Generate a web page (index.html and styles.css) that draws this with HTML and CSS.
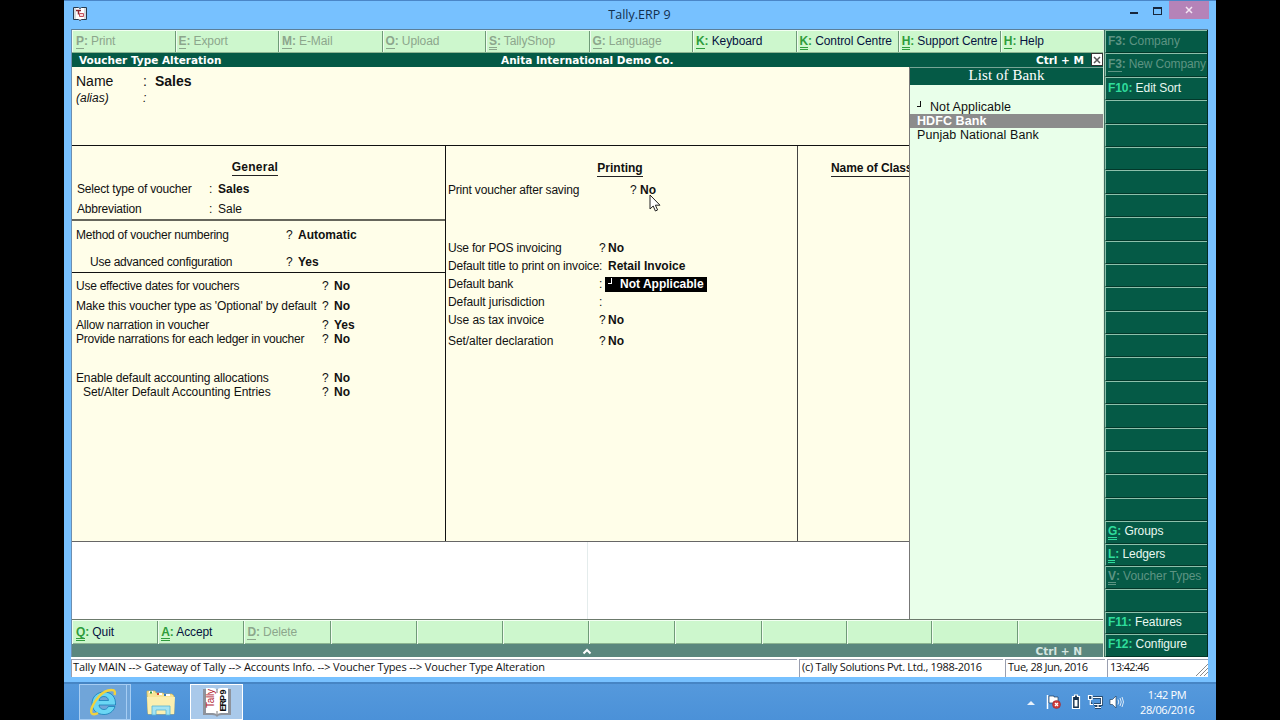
FILE: index.html
```html
<!DOCTYPE html>
<html>
	<head>
		<meta charset="utf-8">
		<title>Tally.ERP 9</title>
		<link rel="stylesheet" href="styles.css">
	</head>
	<body>
		<div class="desktop">
			<div class="titlebar">
				<svg class="appicon" width="16" height="16" viewBox="0 0 16 16">
					<path d="M1.500 1.500h5l1.500 1 1.500-1h5v12h-5l-1.500 1-1.500-1h-5z" fill="#fff" stroke="#26394e"/>
					<path d="M3 2v11M13 2v11" stroke="#aab4bd"/>
					<path d="M4 4.500h5M6.500 4.500v4" stroke="#8c2430" stroke-width="1.500"/>
					<path d="M7.500 7.500h4v3h-4z" fill="#f6dcdc" stroke="#c4505c"/>
				</svg>
				<span class="wintitle">Tally.ERP 9</span>
				<div class="winbtns">
					<span class="min"></span>
					<span class="max"></span>
					<span class="close"><svg width="8" height="8" viewBox="0 0 8 8"><path d="M1 1l6 6M7 1l-6 6" stroke="#f4e6f4" stroke-width="1.500"/></svg></span>
				</div>
			</div>

			<div class="client">
				<div class="main">
					<div class="toolbar">
						<div class="btn off"><b class="u1">P</b><b>:</b> Print</div>
						<div class="btn off"><b class="u1">E</b><b>:</b> Export</div>
						<div class="btn off"><b class="u1">M</b><b>:</b> E-Mail</div>
						<div class="btn off"><b class="u1">O</b><b>:</b> Upload</div>
						<div class="btn off"><b class="u2">S</b><b>:</b> TallyShop</div>
						<div class="btn off"><b class="u1">G</b><b>:</b> Language</div>
						<div class="btn"><b class="u1">K</b><b>:</b> Keyboard</div>
						<div class="btn"><b class="u2">K</b><b>:</b> Control Centre</div>
						<div class="btn"><b class="u2">H</b><b>:</b> Support Centre</div>
						<div class="btn"><b class="u1">H</b><b>:</b> Help</div>
					</div>
					<div class="strip">
						<span class="s-left">Voucher Type Alteration</span>
						<span class="s-mid">Anita International Demo Co.</span>
						<span class="s-right">Ctrl + M</span>
						<span class="s-close"><svg width="8" height="8" viewBox="0 0 8 8"><path d="M1 1l6 6M7 1l-6 6" stroke="#555" stroke-width="1.500"/></svg></span>
					</div>

					<div class="work">
						<div class="form">
							<div class="name">
								<div class="nrow"><span>Name</span><span>:</span><b>Sales</b></div>
								<div class="nrow alias"><i>(alias)</i><i>:</i></div>
							</div>
							<div class="cols">
								<div class="col general">
									<div class="sec sec1">
										<h2><span>General</span></h2>
										<div class="row"><span>Select type of voucher</span><span>:</span><b>Sales</b></div>
										<div class="row"><span>Abbreviation</span><span>:</span><span>Sale</span></div>
									</div>
									<div class="sec sec2">
										<div class="row"><span class="narrow">Method of voucher numbering</span><span>?</span><b>Automatic</b></div>
										<div class="row adv"><span class="narrow">Use advanced configuration</span><span>?</span><b>Yes</b></div>
									</div>
									<div class="sec sec3">
										<div class="row"><span class="narrow">Use effective dates for vouchers</span><span>?</span><b>No</b></div>
										<div class="row"><span class="opt">Make this voucher type as 'Optional' by default</span><span>?</span><b>No</b></div>
										<div class="row"><span>Allow narration in voucher</span><span>?</span><b>Yes</b></div>
										<div class="row tight"><span class="narrow">Provide narrations for each ledger in voucher</span><span>?</span><b>No</b></div>
										<div class="row alloc"><span class="opt">Enable default accounting allocations</span><span>?</span><b>No</b></div>
										<div class="row tight sub"><span class="loose">Set/Alter Default Accounting Entries</span><span>?</span><b>No</b></div>
									</div>
								</div>
								<div class="col printing">
									<h2><span>Printing</span></h2>
									<div class="row wide"><span>Print voucher after saving</span><span>?</span><b>No</b></div>
									<div class="row pos"><span>Use for POS invoicing</span><span>?</span><b>No</b></div>
									<div class="row"><span>Default title to print on invoice</span><span>:</span><b>Retail Invoice</b></div>
									<div class="row"><span>Default bank</span><span>:</span><b class="field"><i class="tick"></i>Not Applicable</b></div>
									<div class="row"><span class="loose">Default jurisdiction</span><span>:</span></div>
									<div class="row"><span class="loose">Use as tax invoice</span><span>?</span><b>No</b></div>
									<div class="row decl"><span class="loose">Set/alter declaration</span><span>?</span><b>No</b></div>
								</div>
								<div class="col classes">
									<h2><span>Name of Class</span></h2>
								</div>
							</div>
							<div class="blank"><div></div></div>
						</div>
						<div class="list">
							<div class="list-head">List of Bank</div>
							<div class="item first"><i class="tick"></i>Not Applicable</div>
							<div class="item sel">HDFC Bank</div>
							<div class="item">Punjab National Bank</div>
						</div>
					</div>

					<div class="toolbar bottom">
						<div class="btn"><b class="u2">Q</b><b>:</b> Quit</div>
						<div class="btn"><b class="u2">A</b><b>:</b> Accept</div>
						<div class="btn off"><b class="u1">D</b><b>:</b> Delete</div>
						<div class="btn"></div><div class="btn"></div><div class="btn"></div>
						<div class="btn"></div><div class="btn"></div><div class="btn"></div>
						<div class="btn"></div><div class="btn"></div><div class="btn"></div>
					</div>
					<div class="greybar">
						<svg width="10" height="7" viewBox="0 0 10 7"><path d="M1.500 5.500L5 2l3.500 3.500" fill="none" stroke="#fff" stroke-width="2"/></svg>
						<span>Ctrl + N</span>
					</div>
				</div>

				<div class="side">
					<div class="sb off"><b>F3:</b> Company</div>
					<div class="sb off"><b class="u1">F3</b><b>:</b> New Company</div>
					<div class="sb"><b>F10:</b> Edit Sort</div>
					<div class="sb"></div><div class="sb"></div><div class="sb"></div>
					<div class="sb"></div><div class="sb"></div><div class="sb"></div>
					<div class="sb"></div><div class="sb"></div><div class="sb"></div>
					<div class="sb"></div><div class="sb"></div><div class="sb"></div>
					<div class="sb"></div><div class="sb"></div><div class="sb"></div>
					<div class="sb"></div><div class="sb"></div><div class="sb"></div>
					<div class="sb low"><b class="u2">G</b><b>:</b> Groups</div>
					<div class="sb low"><b class="u2">L</b><b>:</b> Ledgers</div>
					<div class="sb low off"><b class="u2">V</b><b>:</b> Voucher Types</div>
					<div class="sb low"></div>
					<div class="sb low"><b>F11:</b> Features</div>
					<div class="sb low"><b>F12:</b> Configure</div>
				</div>
			</div>

			<div class="status">
				<div class="path">Tally MAIN --&gt; Gateway of Tally --&gt; Accounts Info. --&gt; Voucher Types --&gt; Voucher Type Alteration</div>
				<div class="copy">(c) Tally Solutions Pvt. Ltd., 1988-2016</div>
				<div class="date">Tue, 28 Jun, 2016</div>
				<div class="time">13:42:46
					<svg width="12" height="12" viewBox="0 0 12 12"><path d="M0 12L12 0M4 12l8-8M8 12l4-4" stroke="#8a8a8a"/></svg>
				</div>
			</div>

			<div class="taskbar">
				<div class="task ie">
					<svg width="30" height="30" viewBox="0 0 30 30">
						<path d="M27 19.500c-1.500 5-6 8-11 8C9 27.500 4 23 4 16.500S9 5 16 5c7.500 0 12 5 11.500 13H11c.3 2.800 2.200 4.500 5 4.500 2 0 3.500-1 4.300-3zM11 13.500h9.500c-.3-2.500-2-4-4.600-4-2.700 0-4.500 1.500-4.900 4z" fill="#6ad6f4" stroke="#177fb8" stroke-width=".8"/>
						<path d="M26.500 8c1-3 .3-5-2.500-5-3.500-.2-9 2-13 6.500-5 5.500-9 13-7.500 16.500 1 2 4 1.500 6.500 0" fill="none" stroke="#f2d23c" stroke-width="2.400"/>
					</svg>
				</div>
				<div class="ie-stack"></div>
				<div class="task folder">
					<svg width="32" height="30" viewBox="0 0 32 30">
						<path d="M2 6V4h8l1 2h7l1 1h8l2 2v18H3z" fill="#f7e596" stroke="#d3b552" stroke-width=".7"/>
						<path d="M4 5h4M12 7h5M20 8h5" stroke="#fff" stroke-width="2"/>
						<path d="M6 4.500v2" stroke="#2b9645" stroke-width="2"/>
						<path d="M13 6v2" stroke="#d34332" stroke-width="2"/>
						<path d="M20 7v2" stroke="#347bc0" stroke-width="2"/>
						<path d="M2 10h28l-1 17H3z" fill="#fbefb0"/>
						<path d="M7 28v-9h18v9h-4v-5H11v5z" fill="#a5e4f2" stroke="#55b4d4" stroke-width=".8"/>
					</svg>
				</div>
				<div class="task active">
					<svg width="30" height="30" viewBox="0 0 30 30">
						<path d="M1 2h9q4 0 5 2 1-2 5-2h9v26h-9q-4 0-5 2-1-2-5-2H1z" fill="#8e939c"/>
						<path d="M4 1h7q3 0 4 2 1-2 4-2h7v25h-7q-3 0-4 2-1-2-4-2H4z" fill="#fff"/>
						<path d="M15 2v4M15 24v4" stroke="#777"/>
						<text class="ico-red" transform="translate(12 21) rotate(-90)" textLength="19">Tally</text>
						<text class="ico-blk" transform="translate(24 24.500) rotate(-90)" textLength="22">ERP 9</text>
					</svg>
				</div>
				<div class="tray">
					<svg class="t-up" width="8" height="5" viewBox="0 0 8 5"><path d="M0 5l4-4 4 4z" fill="#e8f2fb"/></svg>
					<svg class="t-flag" width="16" height="16" viewBox="0 0 16 16">
						<path d="M1.500 1v14" stroke="#fff" stroke-width="1.500"/>
						<path d="M3 2h5v1h4v7H8V9H3z" fill="#fff" stroke="#1f3c5c" stroke-width=".7"/>
						<circle cx="10.500" cy="10.500" r="4" fill="#cf3a3a" stroke="#8e2530" stroke-width=".5"/>
						<path d="M9 9l3 3M12 9l-3 3" stroke="#fff" stroke-width="1.300"/>
					</svg>
					<svg class="t-bat" width="10" height="16" viewBox="0 0 10 16">
						<path d="M3.500 1h3v1.500h2v12h-7v-12h2z" fill="#17324f" stroke="#fff" stroke-width="1.200"/>
						<path d="M3.500 6h3v6.500h-3z" fill="#fff"/>
					</svg>
					<svg class="t-net" width="16" height="16" viewBox="0 0 16 16">
						<path d="M6 3.500h8.500v7H7M8 13.500h6M11 10.500v3" fill="none" stroke="#17324f" stroke-width="2.600"/>
						<path d="M6 3.500h8.500v7H7M8 13.500h6M11 10.500v3" fill="none" stroke="#fff" stroke-width="1.200"/>
						<path d="M1.500 1.500h3.500v4H1.500zM3.300 6v4.500H6" fill="#24496e" stroke="#fff" stroke-width="1.200"/>
					</svg>
					<svg class="t-vol" width="16" height="16" viewBox="0 0 16 16">
						<path d="M1 5.500h2.500L7 2v12l-3.500-3.500H1z" fill="#fff" stroke="#17324f" stroke-width=".6"/>
						<path d="M9 5.500q1.500 2.500 0 5M11 4q2.500 4 0 8M13 3q3 5 0 10" fill="none" stroke="#dceaf8" stroke-width="1"/>
					</svg>
					<div class="clock"><div>1:42 PM</div><div>28/06/2016</div></div>
				</div>
			</div>

			<svg class="cursor" width="12" height="18" viewBox="0 0 12 18"><path d="M1 1v14l3.200-3 2.200 5 2.200-1-2.200-4.800H11z" fill="#fff" stroke="#222"/></svg>
		</div>
	</body>
</html>
```
FILE: styles.css
```css
* {
	box-sizing: border-box;
}
body {
	margin: 0;
	background: #000;
	font-family: "Liberation Sans", Arial, sans-serif;
	font-size: 12px;
	color: #111;
	overflow: hidden;
}
h2 {
	margin: 0;
	font-size: 12px;
	text-align: center;
	line-height: 15px;
}
h2 span {
	display: inline-block;
	border-bottom: 1px solid #222;
}
.desktop {
	position: relative;
	width: 1152px;
	height: 720px;
	margin: 0 auto;
	background: #77c1ff;
	border-top: 1px solid #4a86c8;
	display: flex;
	flex-direction: column;
}

/* window title */
.titlebar {
	height: 28px;
	display: flex;
	align-items: center;
	padding: 0 7px 2px 8px;
	flex: none;
}
.wintitle {
	flex: 1;
	text-align: center;
	font-family: "Open Sans", sans-serif;
	font-size: 12.5px;
	color: #12304f;
	padding-left: 61px;
}
.winbtns {
	display: flex;
	align-self: flex-start;
	height: 18px;
}
.min {
	width: 8px;
	height: 2px;
	margin: 11px 15px 0 0;
	background: #17263c;
}
.max {
	width: 9px;
	height: 8px;
	margin: 6px 7px 0 0;
	border: 1px solid #17263c;
	border-top-width: 2px;
}
.close {
	width: 40px;
	background: #b583b8;
	display: flex;
	align-items: center;
	justify-content: center;
}

/* main window */
.client {
	display: flex;
	height: 628px;
	margin: 0 8px 0 7px;
	border-top: 1px solid #5b7f9a;
	border-left: 1px solid #6d8fb0;
	flex: none;
}
.main {
	width: 1032px;
	display: flex;
	flex-direction: column;
	border-right: 1px solid #d9ecd9;
}
.toolbar {
	display: grid;
	grid-template-columns: repeat(7, 103.5px) repeat(3, 1fr);
	height: 23px;
	flex: none;
	background: #cdf7cd;
	border-top: 1px solid #f2fff2;
	border-bottom: 1px solid #8cb592;
	color: #06133f;
	letter-spacing: -.1px;
}
.btn {
	padding-left: 3px;
	line-height: 21px;
	border-right: 1px solid #6f9a78;
	box-shadow: inset 1px 0 #effdef;
	white-space: nowrap;
}
.btn:first-child {
	padding-left: 4px;
}
.btn:last-child {
	border-right: 0;
}
.btn b {
	color: #2f9c3c;
}
.off, .btn.off b {
	color: #8ca68c;
}
.u1 {
	display: inline-block;
	line-height: 13px;
	border-bottom: 1px solid;
}
.u2 {
	display: inline-block;
	line-height: 12px;
	border-bottom: 3px double;
}
.strip {
	height: 14px;
	flex: none;
	display: grid;
	grid-template-columns: 422px 1fr 130px 12px;
	background: #055a46;
	color: #fff;
	font: bold 10.5px/14px "DejaVu Sans", Verdana, sans-serif;
	padding-left: 7px;
	white-space: nowrap;
}
.s-right {
	text-align: right;
	padding-right: 7px;
}
.s-close {
	width: 12px;
	height: 13px;
	background: #fff;
	border: 1px solid #333;
	display: flex;
	align-items: center;
	justify-content: center;
}
.work {
	height: 553px;
	flex: none;
	display: flex;
	border-bottom: 1px solid #6c7a6c;
	background: #fff;
}
.form {
	width: 837px;
	display: flex;
	flex-direction: column;
	background: #fffee9;
	overflow: hidden;
}
.name {
	height: 79px;
	padding: 5px 4px;
	border-bottom: 1px solid #111;
}
.nrow {
	display: grid;
	grid-template-columns: 67px 12px 1fr;
	font-size: 14px;
	line-height: 18px;
}
.alias {
	font-size: 12px;
	line-height: 17px;
}
.cols {
	height: 396px;
	display: flex;
	border-bottom: 1px solid #666;
}
.col {
	flex: none;
}
.general {
	width: 374px;
	border-right: 1px solid #111;
}
.printing {
	width: 352px;
	border-right: 1px solid #444;
	padding: 15px 0 0 2px;
}
.classes {
	width: 150px;
	padding: 15px 0 0 33px;
	white-space: nowrap;
}
.classes h2 {
	text-align: left;
	letter-spacing: -.1px;
}
.row {
	display: grid;
	grid-template-columns: 246px 12px 1fr;
	line-height: 14px;
	height: 20px;
	white-space: nowrap;
}
.row span:first-child {
	letter-spacing: -.19px;
}
.row .narrow:first-child {
	letter-spacing: -.25px;
}
.row .opt:first-child {
	letter-spacing: -.15px;
}
.row .loose:first-child {
	letter-spacing: -.07px;
}
.sec {
	padding: 7px 0 0 4px;
}
.sec1 {
	height: 75px;
	padding: 14px 0 0 5px;
	border-bottom: 2px solid #66665c;
}
.sec1 h2 {
	margin-right: 17px;
	padding-left: 5px;
	margin-bottom: 6px;
	letter-spacing: .25px;
}
.sec1 .row {
	grid-template-columns: 132px 9px 1fr;
}
.sec2 {
	height: 52px;
	border-bottom: 1px solid #111;
}
.sec2 .row {
	height: 27px;
	grid-template-columns: 210px 12px 1fr;
}
.adv span:first-child {
	padding-left: 14px;
}
.sec3 {
	padding-top: 6px;
}
.sec3 .row {
	height: 19.6px;
}
.sec3 .tight {
	margin-top: -6px;
}
.sec3 .alloc {
	margin-top: 20px;
}
.sub span:first-child {
	padding-left: 7px;
}
.printing h2 {
	margin: 0 5px 6px 0;
}
.printing .row {
	grid-template-columns: 151px 9px 1fr;
	height: 18px;
}
.printing .wide {
	grid-template-columns: 182px 10px 1fr;
}
.printing .pos {
	margin-top: 40px;
}
.printing .decl {
	margin-top: 3px;
}
.field {
	justify-self: start;
	height: 15px;
	line-height: 15px;
	background: #000;
	color: #fff;
	margin-left: -3px;
	padding: 0 3px;
}
.tick {
	display: inline-block;
	width: 4px;
	height: 6px;
	border-right: 1px solid;
	border-bottom: 1px solid;
	margin-right: 8px;
	vertical-align: 4px;
}
.blank {
	flex: 1;
	background: #fff;
}
.blank div {
	width: 516px;
	height: 100%;
	border-right: 1px solid #e4ecec;
}

/* list of banks */
.list {
	width: 194px;
	background: #e9ffea;
	border-left: 1px solid #777;
	font-size: 12.5px;
	letter-spacing: .08px;
}
.list-head {
	height: 18px;
	background: #055a46;
	border-top: 1px solid #78a596;
	color: #fff;
	text-align: center;
	font: 15px/15px "Liberation Serif", serif;
	margin-bottom: 15px;
}
.item {
	height: 14px;
	line-height: 15px;
	padding-left: 7px;
}
.item .tick {
	margin-right: 9px;
}
.sel {
	background: #8c8c8c;
	color: #fff;
	font-weight: bold;
}
.bottom {
	grid-template-columns: repeat(8, 86.2px) repeat(4, 1fr);
	height: 24px;
}
.bottom .btn {
	line-height: 23px;
}
.greybar {
	height: 13px;
	background: #5a877e;
	color: #d5e6e0;
	font: bold 10.5px/15px "DejaVu Sans", Verdana, sans-serif;
	display: flex;
	justify-content: space-between;
	padding: 0 21px 0 510px;
}
.greybar svg {
	margin-top: 4px;
}

/* buttons on the right */
.side {
	flex: 1;
	display: grid;
	grid-template-rows: repeat(21, 23.4px) repeat(6, 1fr);
	background: #055a46;
	border-right: 1px solid #012a20;
	border-left: 1px solid #3c6d5e;
	letter-spacing: -.08px;
}
.sb {
	padding: 1px 0 0 2px;
	border-top: 1px solid #8dc0ab;
	border-left: 1px solid #8dc0ab;
	border-bottom: 1px solid #02382a;
	color: #e8f8f0;
	line-height: 19px;
	white-space: nowrap;
}
.low {
	padding-top: 0;
	line-height: 18px;
}
.sb b {
	color: #2fdc9c;
}
.sb.off, .sb.off b {
	color: #5d9483;
}
.sb:nth-child(2) {
	letter-spacing: -.15px;
}

/* status line */
.status {
	height: 20px;
	flex: none;
	margin: 0 8px 0 7px;
	background: #fff;
	display: grid;
	grid-template-columns: 728px 206px 102px 1fr;
	font: 11px/18px "Open Sans", sans-serif;
	white-space: nowrap;
	padding-top: 2px;
}
.status div {
	border-top: 1px solid #999fb0;
	border-left: 1px solid #999fb0;
	padding-left: 2px;
	margin-right: 2px;
	line-height: 14px;
}
.status .path {
	padding-left: 1px;
	letter-spacing: -.14px;
}
.status .copy {
	letter-spacing: -.3px;
}
.status .date {
	letter-spacing: -.46px;
}
.status .time {
	display: flex;
	justify-content: space-between;
	margin-right: 0;
	letter-spacing: -.6px;
}
.time svg {
	margin-top: 4px;
}

/* taskbar */
.taskbar {
	flex: 1;
	margin-top: 5px;
	background: linear-gradient(#5599dc, #4b91d8);
	border-top: 2px solid #4685c4;
	display: flex;
}
.task {
	width: 48px;
	display: flex;
	align-items: center;
	justify-content: center;
}
.ie {
	margin-left: 15px;
	border: 1px solid #a6cdf3;
	background: #70a5d9;
	width: 48px;
}
.ie-stack {
	width: 4px;
	background: #70a5d9;
	border: 1px solid #a6cdf3;
	border-left: 0;
	margin-right: 6px;
}
.active {
	width: 53px;
	margin-left: 5px;
	border: 1px solid #fff;
	background: #a9c9ea;
}
.ico-red {
	font-size: 10px;
	fill: #b32634;
}
.ico-blk {
	font-size: 9px;
	font-weight: bold;
	fill: #111;
}
.tray {
	margin-left: auto;
	display: flex;
	align-items: center;
	padding-right: 22px;
}
.t-up {
	margin-right: 11px;
}
.t-flag {
	margin-right: 9px;
}
.t-bat {
	margin-right: 6px;
}
.t-net {
	margin-right: 6px;
}
.t-vol {
	margin-right: 15px;
}
.clock {
	width: 54px;
	color: #fff;
	text-align: center;
	font: 11px/15px "Open Sans", sans-serif;
	letter-spacing: -.4px;
	white-space: nowrap;
}

.cursor {
	position: absolute;
	left: 585px;
	top: 193px;
}
```
